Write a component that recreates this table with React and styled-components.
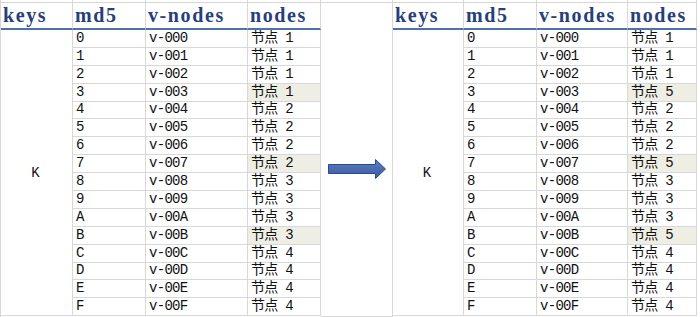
import styled, { createGlobalStyle } from "styled-components";

const GlobalStyle = createGlobalStyle`
  html, body {
    margin: 0;
    padding: 0;
    background: #ffffff;
  }
`;

const keys = ["0", "1", "2", "3", "4", "5", "6", "7", "8", "9", "A", "B", "C", "D", "E", "F"];
const moved = [3, 7, 11];

const grid = "#d8d8d8";

const Sheet = styled.div`
  display: flex;
  width: 700px;
  height: 317px;
  overflow: hidden;
  font-family: "Liberation Mono", "Noto Sans CJK SC", monospace;
`;

const Table = styled.div`
  display: grid;
  grid-template-columns: ${(p) => p.$cols};
  grid-template-rows: 3px 27px repeat(16, 17.9px);
  border-left: ${(p) => (p.$edge ? `1px solid ${grid}` : "none")};
  box-sizing: border-box;
`;

const Spacer = styled.div`
  border-right: 1px solid ${grid};
  border-bottom: 1px solid ${grid};
  box-sizing: border-box;
`;

const Head = styled.div`
  display: flex;
  align-items: flex-end;
  padding: 0 0 3px 2px;
  border-right: 1px solid ${grid};
  border-bottom: 2px solid #4f70ae;
  box-sizing: border-box;
  font-family: "Liberation Serif", serif;
  font-weight: 700;
  font-size: 20px;
  line-height: 20px;
  letter-spacing: 1.6px;
  color: #283f7a;
  white-space: nowrap;
`;

const Cell = styled.div`
  display: flex;
  align-items: flex-end;
  padding: 0 0 1px 3px;
  border-right: 1px solid ${grid};
  border-bottom: 1px solid ${grid};
  box-sizing: border-box;
  background: ${(p) => (p.$hl ? "#eeeee5" : "transparent")};
  font-size: 14px;
  line-height: 15px;
  letter-spacing: -0.7px;
  color: #111;
  white-space: nowrap;
`;

const KeyCell = styled.div`
  grid-row: 3 / span 16;
  display: flex;
  align-items: center;
  justify-content: center;
  padding-right: 2px;
  border-right: 1px solid ${grid};
  border-bottom: 1px solid ${grid};
  box-sizing: border-box;
  font-size: 14px;
  color: #111;
`;

const Gap = styled.div`
  width: 72px;
  display: grid;
  grid-template-rows: 3px 27px 1fr;
  border-right: 1px solid ${grid};
  box-sizing: border-box;
`;

const GapTop = styled.div`
  border-bottom: 1px solid ${grid};
`;

const ArrowBox = styled.div`
  display: flex;
  align-items: center;
  padding: 0 0 8px 6px;
  border-bottom: 1px solid ${grid};
  grid-row: 3;
`;

function Arrow() {
  return (
    <svg width="60" height="22" viewBox="0 0 60 22">
      <defs>
        <linearGradient id="ag" x1="0" y1="0" x2="0" y2="1">
          <stop offset="0" stopColor="#5a7cc2" />
          <stop offset="0.5" stopColor="#4a6cb3" />
          <stop offset="1" stopColor="#3a5a9e" />
        </linearGradient>
      </defs>
      <path
        d="M1.5 6.5 H48.5 V1.5 L58.5 11 L48.5 20.5 V15.5 H1.5 Z"
        fill="url(#ag)"
        stroke="#2e4a86"
        strokeWidth="1"
      />
    </svg>
  );
}

function SheetTable({ cols, nodes, edge }) {
  return (
    <Table $cols={cols} $edge={edge}>
      <Spacer />
      <Spacer />
      <Spacer />
      <Spacer />
      <Head>keys</Head>
      <Head>md5</Head>
      <Head>v-nodes</Head>
      <Head>nodes</Head>
      <KeyCell>K</KeyCell>
      {keys.map((k, i) => [
        <Cell key={`m${k}`} style={{ gridRow: i + 3, gridColumn: 2 }}>{k}</Cell>,
        <Cell key={`v${k}`} style={{ gridRow: i + 3, gridColumn: 3 }}>v-00{k}</Cell>,
        <Cell key={`n${k}`} style={{ gridRow: i + 3, gridColumn: 4 }} $hl={moved.includes(i)}>
          节点 {nodes[i]}
        </Cell>,
      ])}
    </Table>
  );
}

const before = [1, 1, 1, 1, 2, 2, 2, 2, 3, 3, 3, 3, 4, 4, 4, 4];
const after = before.map((n, i) => (moved.includes(i) ? 5 : n));

export default function App() {
  return (
    <>
      <GlobalStyle />
      <Sheet>
        <SheetTable cols="72px 73px 102px 73px" nodes={before} edge />
        <Gap>
          <GapTop />
          <div />
          <ArrowBox>
            <Arrow />
          </ArrowBox>
        </Gap>
        <SheetTable cols="71px 73px 91px 69px" nodes={after} />
      </Sheet>
    </>
  );
}
